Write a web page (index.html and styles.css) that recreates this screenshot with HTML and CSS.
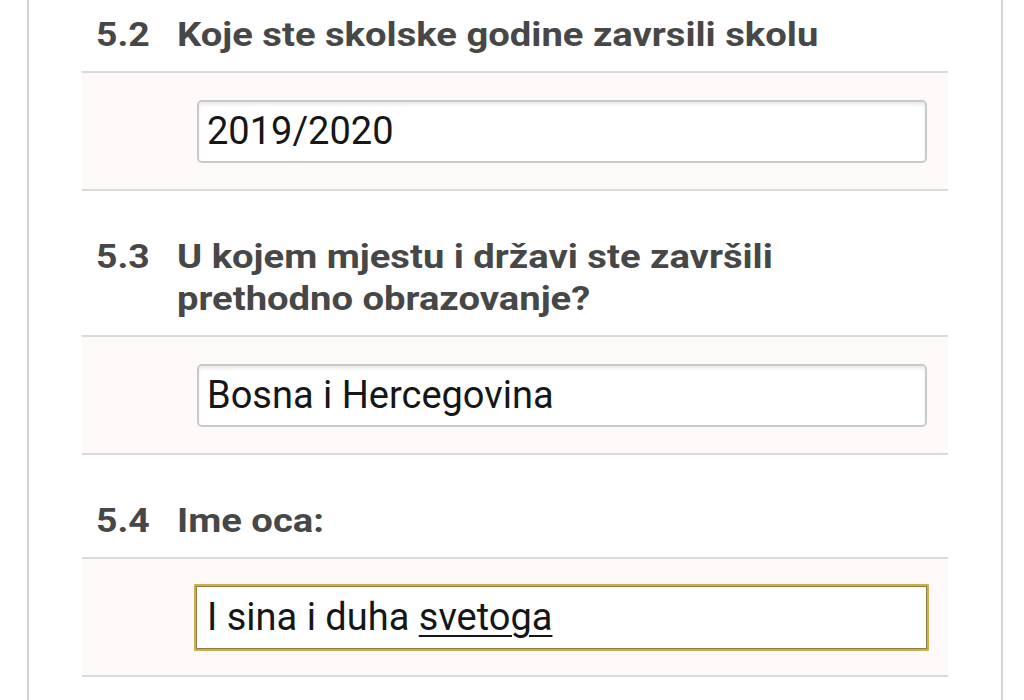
FILE: index.html
```html
<!DOCTYPE html>
<html lang="bs">
<head>
<meta charset="utf-8">
<title>Obrazac</title>
<link rel="stylesheet" href="styles.css">
</head>
<body>
<div class="card">
  <section class="q">
    <h2 class="q-title"><span class="q-num">5.2</span><span class="q-text">Koje ste skolske godine zavrsili skolu</span></h2>
    <div class="band"><div class="field">2019/2020</div></div>
  </section>
  <section class="q">
    <h2 class="q-title"><span class="q-num">5.3</span><span class="q-text">U kojem mjestu i državi ste završili prethodno obrazovanje?</span></h2>
    <div class="band"><div class="field">Bosna i Hercegovina</div></div>
  </section>
  <section class="q">
    <h2 class="q-title"><span class="q-num">5.4</span><span class="q-text">Ime oca:</span></h2>
    <div class="band"><div class="field focus">I sina i duha <span class="spell">svetoga</span></div></div>
  </section>
</div>
</body>
</html>
```
FILE: styles.css
```css
html, body {
  margin: 0;
  padding: 0;
  background: #ffffff;
}
body {
  font-family: Roboto, "Liberation Sans", Arial, sans-serif;
  width: 1024px;
  height: 700px;
  overflow: hidden;
}
.card {
  margin-left: 27px;
  width: 976px;
  height: 700px;
  box-sizing: border-box;
  border-left: 2px solid #d2d2d2;
  border-right: 2px solid #d2d2d2;
  padding: 13px 53px 0 53px;
}
.q {
  margin-bottom: 44px;
}
.q-title {
  display: flex;
  align-items: flex-start;
  margin: 0 0 16px 0;
  padding-left: 14px;
  font-size: 34px;
  line-height: 42px;
  font-weight: 700;
  color: #474747;
}
.q-num {
  flex: 0 0 81px;
  transform: scaleX(1.1);
  transform-origin: left center;
}
.q-text {
  flex: 0 0 600px;
  transform: scaleX(1.123);
  transform-origin: left center;
}
.band {
  background: #fcf9f8;
  border-top: 2px solid #dadada;
  border-bottom: 2px solid #dadada;
  padding: 27px 21px 26px 115px;
}
.field {
  height: 63px;
  box-sizing: border-box;
  background: #ffffff;
  border: 2px solid #c9c9c9;
  border-radius: 5px;
  box-shadow: inset 0 3px 3px rgba(0,0,0,0.08);
  padding: 0 8px;
  font-size: 38px;
  line-height: 59px;
  color: #161616;
  white-space: nowrap;
}
.field.focus {
  height: 67px;
  line-height: 63px;
  margin: -2px -2px -2px -3px;
  padding: 0 11px;
  border-radius: 1px;
  border: 2px solid #cbb04a;
  box-shadow: inset 0 0 0 1px #8c7d49;
}
.spell {
  text-decoration: underline;
  text-decoration-thickness: 2px;
  text-underline-offset: 5px;
}
```
